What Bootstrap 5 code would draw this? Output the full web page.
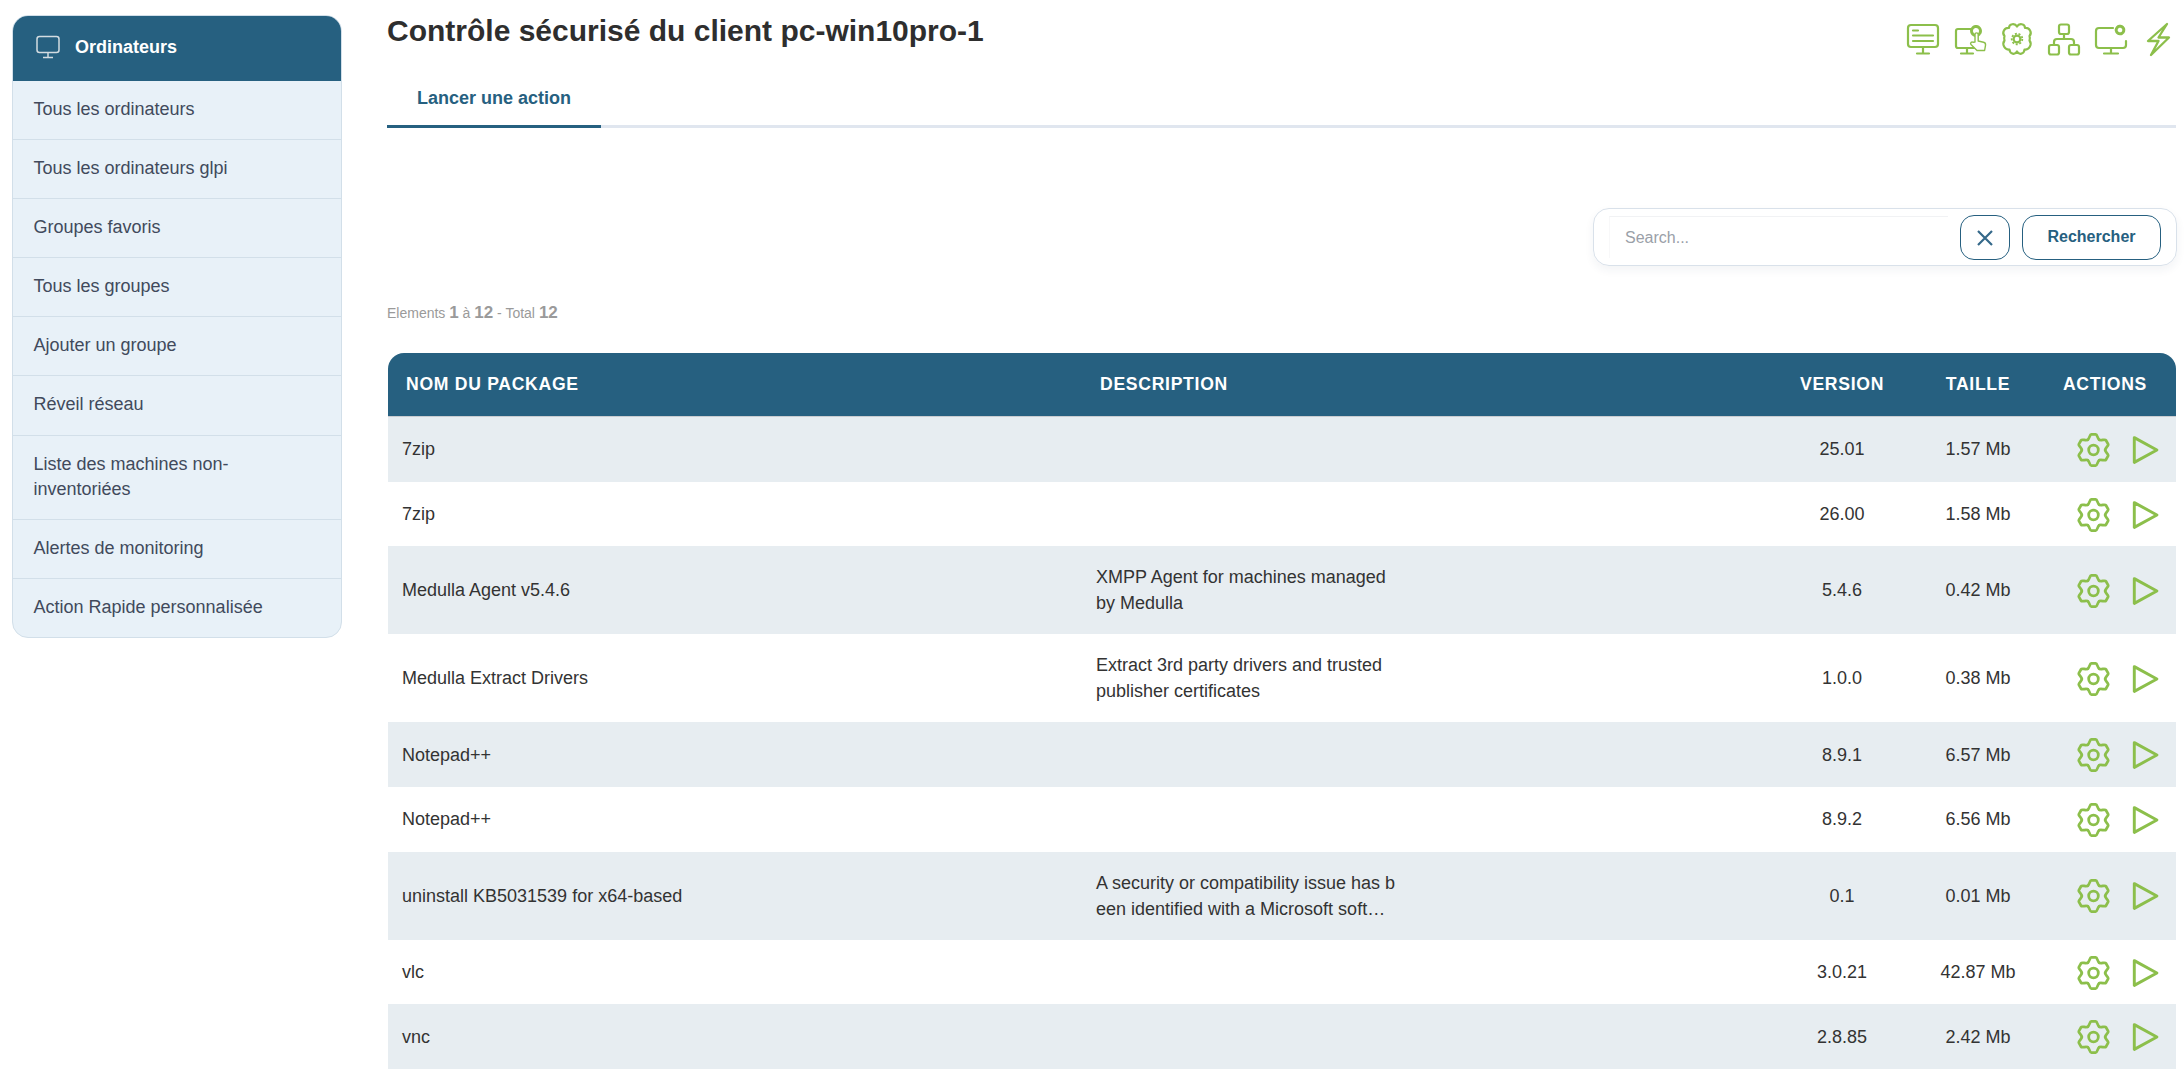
<!DOCTYPE html>
<html lang="fr">
<head>
<meta charset="utf-8">
<title>Contrôle sécurisé</title>
<link rel="stylesheet" href="https://cdn.jsdelivr.net/npm/bootstrap@5.3.0/dist/css/bootstrap.min.css">
<style>
html,body{height:1071px;overflow:hidden;background:#fff}
body{font-family:"Liberation Sans",Arial,sans-serif;color:#333;font-size:18px}
.shell{height:1071px;overflow:hidden;padding:15px 8px 0 12px;gap:45px}
.side{width:330px;flex:none;border:1px solid #d2dfe9;border-radius:16px;overflow:hidden;background:#e8f1f8;align-self:flex-start}
.side-head{height:66px;margin:-1px -1px 0;background:#266080;color:#fff;font-weight:700;font-size:18px;padding:0 0 2px 24px;gap:15px}
.side-head svg{width:24px;height:24px;color:#d3dce1}
.side .list-group-item{background:transparent;border-color:#d2dfe9;color:#414a5c;font-size:18px;line-height:25px;padding:16px 20.500px 17.100px}
.main{flex:1;min-width:0}
.ttl{font-size:30px;font-weight:700;color:#2e2e2e;line-height:36px;margin:-2px 0 0}
.top-ico{gap:11px;color:#8cbf4b;margin-top:6px}
.top-ico svg{width:36px;height:36px;display:block}
.tabs{border-bottom:3px solid #e0e6ef;margin-top:19px;height:52px}
.tabs .nav-link{color:#266080;font-weight:700;font-size:18px;width:214px;height:52px;padding:9px 0 0 30px;border:0;border-bottom:3px solid #266080;border-radius:0;background:none}
.srch-wrap{margin-top:80px}
.srch{width:584px;height:58px;margin-right:-1px;border:1px solid #d9e1ea;border-radius:16px;box-shadow:0 4px 10px rgba(30,50,80,.06);padding:0 15px;gap:12px}
.srch input{flex:1;min-width:0;height:42px;border:0;border-top:1px solid #f1f2f4;border-left:1px solid #f8f8f9;border-radius:0;font-size:16px;padding:0 15px;box-shadow:none}
.srch input::placeholder{color:#9aa0a8}
.btn-x,.btn-go{height:45px;border:1.500px solid #266080;border-radius:14px;background:#fff;color:#266080;padding:0;font-weight:700;font-size:16px}
.btn-x{width:50px}.btn-go{width:139px}
.cnt{color:#9a9a9a;font-size:14px;margin-top:35px;line-height:24px;height:24px}
.cnt b{font-size:17px}
.pk{table-layout:fixed;width:1788px;margin:28px 0 0 1px;--bs-table-striped-bg:#e7edf1;--bs-table-striped-color:#333;--bs-table-color:#333;border-collapse:separate;border-spacing:0}
.pk thead th{background:#266080;color:#fff;height:64px;font-size:17.600px;font-weight:700;letter-spacing:.7px;text-transform:uppercase;vertical-align:middle;border-bottom:1px solid #c9ccd0;padding:0 18px;box-shadow:none}
.pk thead th:first-child{border-top-left-radius:16px}
.pk thead th:last-child{border-top-right-radius:16px;padding:0 29px 0 0}
.pk td{font-size:18px;vertical-align:middle;border:0;padding:0 14px;height:64.700px;line-height:26px}
.pk tr.tall td{height:88px}
.acts{gap:16px;color:#8cbf4b;padding:1px 0 0 8px}
.acts svg{width:36px;height:36px;display:block}
</style>
</head>
<body>
<svg width="0" height="0" class="position-absolute">
  <symbol id="gear" viewBox="0 0 24 24">
    <g fill="none" stroke="currentColor" stroke-width="1.900" stroke-linecap="round">
      <path id="lobe" d="M8 5.070C9.300 4.300 9.300 1.300 10.500 1.300H13.500C14.700 1.300 14.700 4.300 16 5.070"/>
      <path transform="rotate(60 12 12)" d="M8 5.070C9.300 4.300 9.300 1.300 10.500 1.300H13.500C14.700 1.300 14.700 4.300 16 5.070"/>
      <path transform="rotate(120 12 12)" d="M8 5.070C9.300 4.300 9.300 1.300 10.500 1.300H13.500C14.700 1.300 14.700 4.300 16 5.070"/>
      <path transform="rotate(180 12 12)" d="M8 5.070C9.300 4.300 9.300 1.300 10.500 1.300H13.500C14.700 1.300 14.700 4.300 16 5.070"/>
      <path transform="rotate(240 12 12)" d="M8 5.070C9.300 4.300 9.300 1.300 10.500 1.300H13.500C14.700 1.300 14.700 4.300 16 5.070"/>
      <path transform="rotate(300 12 12)" d="M8 5.070C9.300 4.300 9.300 1.300 10.500 1.300H13.500C14.700 1.300 14.700 4.300 16 5.070"/>
      <circle cx="12" cy="12" r="3.300"/>
    </g>
  </symbol>
  <symbol id="play" viewBox="0 0 24 24"><path fill="none" stroke="currentColor" stroke-width="2" stroke-linejoin="round" d="M5 3.500L20.500 12L5 20.500Z"/></symbol>
</svg>
<div class="shell d-flex">
  <aside class="side">
    <div class="side-head d-flex align-items-center">
      <svg viewBox="0 0 24 24" fill="none" stroke="currentColor" stroke-width="1.500"><rect x="1" y="1.500" width="22" height="16" rx="2.500"/><path d="M12 18v4M7 22.500h10"/></svg>
      <span>Ordinateurs</span>
    </div>
    <div class="list-group list-group-flush">
      <a class="list-group-item">Tous les ordinateurs</a>
      <a class="list-group-item">Tous les ordinateurs glpi</a>
      <a class="list-group-item">Groupes favoris</a>
      <a class="list-group-item">Tous les groupes</a>
      <a class="list-group-item">Ajouter un groupe</a>
      <a class="list-group-item">Réveil réseau</a>
      <a class="list-group-item">Liste des machines non-inventoriées</a>
      <a class="list-group-item">Alertes de monitoring</a>
      <a class="list-group-item">Action Rapide personnalisée</a>
    </div>
  </aside>
  <main class="main">
    <div class="d-flex justify-content-between align-items-start">
      <h1 class="ttl">Contrôle sécurisé du client pc-win10pro-1</h1>
      <div class="top-ico d-flex">
        <svg viewBox="0 0 36 36" fill="none" stroke="currentColor" stroke-width="2.200" stroke-linecap="round"><rect x="3" y="4" width="30" height="22" rx="3"/><path d="M8 9.500h5M8 14.500h20M8 20h20M18 26v6M12 32.500h12"/></svg>
        <svg viewBox="0 0 36 36" fill="none" stroke="currentColor" stroke-width="2.200" stroke-linecap="round" stroke-linejoin="round"><path d="M19 8H6a2 2 0 0 0-2 2v15a2 2 0 0 0 2 2h16M15 27v5M9 32.500h12"/><circle cx="24" cy="10" r="4.500" stroke-dasharray="2.400 1.100" stroke-width="3"/><path d="M23 21V13.500a1.600 1.600 0 0 1 3.200 0V20l5.300 1.300c1.500.4 2.300 1.500 2 3l-.9 5.200H25l-6-6c-1.200-1.300.6-3.200 2-2.200z" fill="#fff" stroke-width="1.400"/></svg>
        <svg viewBox="0 0 36 36" fill="none" stroke="currentColor" stroke-width="2.200" stroke-linejoin="round"><path d="M18 5.500C16 2 10 2.500 10 7C5.500 6.500 2.500 11.500 5.500 15C5 16.500 5 18 5.500 19.500C2.500 23.500 6 29 10.500 28.500C11 33.500 16 34 18 30.500C20 34 25 33.500 25.500 28.500C30 29 33.500 23.500 30.500 19.500C31 18 31 16.500 30.500 15C33.500 11.500 30.500 6.500 26 7C26 2.500 20 2 18 5.500Z"/><circle cx="18" cy="18" r="3.400" stroke-width="2.200"/><circle cx="18" cy="18" r="5.300" stroke-width="1.800" stroke-dasharray="2 1.700"/></svg>
        <svg viewBox="0 0 36 36" fill="none" stroke="currentColor" stroke-width="2.200" stroke-linejoin="round"><rect x="13" y="3.500" width="10" height="9.500" rx="2"/><rect x="3" y="24" width="10" height="9.500" rx="2"/><rect x="23" y="24" width="10" height="9.500" rx="2"/><path d="M18 13v5M8 24v-3a3 3 0 0 1 3-3h14a3 3 0 0 1 3 3v3"/></svg>
        <svg viewBox="0 0 36 36" fill="none" stroke="currentColor" stroke-width="2.200" stroke-linecap="round" stroke-linejoin="round"><path d="M20 7H6a3 3 0 0 0-3 3v14a3 3 0 0 0 3 3h24a3 3 0 0 0 3-3v-4M18 27v5M11 32.500h14"/><circle cx="27" cy="9" r="3.800" stroke-width="3" stroke-dasharray="2.400 1.200"/></svg>
        <svg viewBox="0 0 36 36" fill="none" stroke="currentColor" stroke-width="2.300" stroke-linecap="round" stroke-linejoin="round"><path d="M27 3L8 20h10.500L11 34L29 16.500H18.500z"/></svg>
      </div>
    </div>
    <ul class="nav tabs">
      <li class="nav-item"><a class="nav-link">Lancer une action</a></li>
    </ul>
    <div class="srch-wrap d-flex justify-content-end">
      <div class="srch d-flex align-items-center">
        <input class="form-control" type="text" placeholder="Search...">
        <button class="btn-x btn" aria-label="Effacer"><svg width="18" height="18" viewBox="0 0 18 18" fill="none" stroke="#35698a" stroke-width="2.200"><path d="M2 2l14 14M16 2L2 16"/></svg></button>
        <button class="btn-go btn">Rechercher</button>
      </div>
    </div>
    <div class="cnt">Elements <b>1</b> à <b>12</b> - Total <b>12</b></div>
    <table class="table table-striped pk">
      <colgroup><col style="width:694px"><col style="width:700px"><col style="width:120px"><col style="width:152px"><col style="width:122px"></colgroup>
      <thead><tr><th>Nom du package</th><th>Description</th><th class="text-center">Version</th><th class="text-center">Taille</th><th class="text-end">Actions</th></tr></thead>
      <tbody>
        <tr><td>7zip</td><td></td><td class="text-center">25.01</td><td class="text-center">1.57 Mb</td><td><div class="acts d-flex"><svg><use href="#gear"/></svg><svg><use href="#play"/></svg></div></td></tr>
        <tr><td>7zip</td><td></td><td class="text-center">26.00</td><td class="text-center">1.58 Mb</td><td><div class="acts d-flex"><svg><use href="#gear"/></svg><svg><use href="#play"/></svg></div></td></tr>
        <tr class="tall"><td>Medulla Agent v5.4.6</td><td class="text-nowrap">XMPP Agent for machines managed<br>by Medulla</td><td class="text-center">5.4.6</td><td class="text-center">0.42 Mb</td><td><div class="acts d-flex"><svg><use href="#gear"/></svg><svg><use href="#play"/></svg></div></td></tr>
        <tr class="tall"><td>Medulla Extract Drivers</td><td class="text-nowrap">Extract 3rd party drivers and trusted<br>publisher certificates</td><td class="text-center">1.0.0</td><td class="text-center">0.38 Mb</td><td><div class="acts d-flex"><svg><use href="#gear"/></svg><svg><use href="#play"/></svg></div></td></tr>
        <tr><td>Notepad++</td><td></td><td class="text-center">8.9.1</td><td class="text-center">6.57 Mb</td><td><div class="acts d-flex"><svg><use href="#gear"/></svg><svg><use href="#play"/></svg></div></td></tr>
        <tr><td>Notepad++</td><td></td><td class="text-center">8.9.2</td><td class="text-center">6.56 Mb</td><td><div class="acts d-flex"><svg><use href="#gear"/></svg><svg><use href="#play"/></svg></div></td></tr>
        <tr class="tall"><td>uninstall KB5031539 for x64-based</td><td class="text-nowrap">A security or compatibility issue has b<br>een identified with a Microsoft soft…</td><td class="text-center">0.1</td><td class="text-center">0.01 Mb</td><td><div class="acts d-flex"><svg><use href="#gear"/></svg><svg><use href="#play"/></svg></div></td></tr>
        <tr><td>vlc</td><td></td><td class="text-center">3.0.21</td><td class="text-center">42.87 Mb</td><td><div class="acts d-flex"><svg><use href="#gear"/></svg><svg><use href="#play"/></svg></div></td></tr>
        <tr><td>vnc</td><td></td><td class="text-center">2.8.85</td><td class="text-center">2.42 Mb</td><td><div class="acts d-flex"><svg><use href="#gear"/></svg><svg><use href="#play"/></svg></div></td></tr>
      </tbody>
    </table>
  </main>
</div>
<script src="https://cdn.jsdelivr.net/npm/bootstrap@5.3.0/dist/js/bootstrap.bundle.min.js"></script>
</body>
</html>
